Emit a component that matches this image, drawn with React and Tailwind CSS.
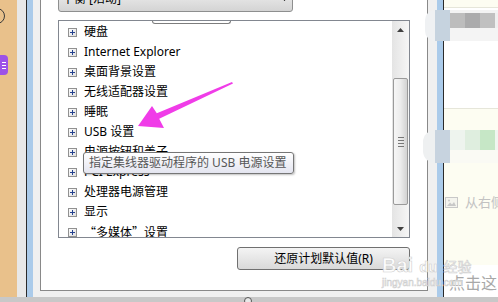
import React from "react"

const cjk = "font-['Noto_Sans','Noto_Sans_CJK_SC',sans-serif]"

const items = [
    "硬盘",
    "Internet Explorer",
    "桌面背景设置",
    "无线适配器设置",
    "睡眠",
    "USB 设置",
    "电源按钮和盖子",
    "PCI Express",
    "处理器电源管理",
    "显示",
    "“多媒体”设置",
]

function PlusBox() {
    return (
        <svg width="9" height="9" viewBox="0 0 9 9" className="flex-none">
            <defs>
                <linearGradient id="pb" x1="0" y1="0" x2="1" y2="1">
                    <stop offset="0" stopColor="#ffffff" />
                    <stop offset="1" stopColor="#dcdcdc" />
                </linearGradient>
            </defs>
            <rect x="0.5" y="0.5" width="8" height="8" fill="url(#pb)" stroke="#919191" />
            <path d="M2 4.5h5M4.5 2v5" stroke="#24418f" strokeWidth="1" />
        </svg>
    )
}

function ListRow({ label }) {
    return (
        <div className="h-[20px] flex items-center pl-[9px] gap-[7px] whitespace-nowrap">
            <PlusBox />
            {label.startsWith("“") ? (
                <span className="font-['Noto_Sans_CJK_SC',sans-serif] text-black">{label}</span>
            ) : (
                <span className="text-black">{label}</span>
            )}
        </div>
    )
}

function Scrollbar() {
    return (
        <div className="w-[17px] flex-none flex flex-col bg-gradient-to-r from-[#e4e4e4] to-[#f6f6f6]">
            <div className="h-[17px] flex items-center justify-center">
                <svg width="7" height="4" viewBox="0 0 7 4">
                    <path d="M0 4L3.5 0L7 4Z" fill="#404040" />
                </svg>
            </div>
            <div className="h-[40px]" />
            <div className="h-[127px] mx-[1px] rounded-[2px] border border-[#9a9a9a] bg-gradient-to-r from-[#f6f6f6] via-[#ececec] to-[#d2d2d2] flex flex-col items-center justify-center gap-[2px]">
                <div className="w-[6px] h-px bg-[#777]" />
                <div className="w-[6px] h-px bg-[#777]" />
                <div className="w-[6px] h-px bg-[#777]" />
                <div className="w-[6px] h-px bg-[#777]" />
            </div>
            <div className="flex-1" />
            <div className="h-[17px] flex items-center justify-center">
                <svg width="7" height="4" viewBox="0 0 7 4">
                    <path d="M0 0L3.5 4L7 0Z" fill="#404040" />
                </svg>
            </div>
        </div>
    )
}

export default function App() {
    return (
        <div className={`relative w-[498px] h-[302px] overflow-hidden flex flex-col text-[12px] bg-white ${cjk}`}>
            <div className="flex h-[297px]">
                {/* left edge of the window behind */}
                <div className="relative w-[17px] flex-none bg-[#e9c18b]">
                    <div className="absolute left-[-11px] top-[8px] w-[16px] h-[16px] rounded-full border-[1.5px] border-[#3a3a3a]" />
                    <div className="absolute left-0 top-[55px] w-[8px] h-[20px] rounded-r-[4px] bg-[#9d52e8] flex flex-col items-center justify-center gap-[2px]">
                        <div className="w-[4px] h-px bg-white" />
                        <div className="w-[4px] h-px bg-white" />
                        <div className="w-[4px] h-px bg-white" />
                    </div>
                </div>
                <div className="w-[9px] flex-none bg-[#e8e8e8]" />
                <div className="w-px flex-none bg-[#2b2b2b]" />
                <div className="w-[6px] flex-none bg-[#abcbea]" />

                {/* dialog face */}
                <div className="w-[404px] flex-none bg-[#f0f0f0] pl-[7px] pr-[9px] pb-[6px]">
                    <div className="h-full bg-white border-x border-b border-[#898989] px-[17px] flex flex-col">
                        <div className="mt-[-14px] h-[26px] w-[235px] flex-none rounded-[3px] border border-[#8e8f8f] bg-gradient-to-b from-[#f3f3f3] to-[#d4d4d4] flex items-center justify-between pl-[3px] pr-[4px]">
                            <span className="text-black">平衡 [活动]</span>
                            <svg width="7" height="4" viewBox="0 0 7 4">
                                <path d="M0 0L3.5 4L7 0Z" fill="#000" />
                            </svg>
                        </div>

                        <div className="relative mt-[8px] h-[218px] flex-none border border-[#828790] flex overflow-hidden">
                            <div className="flex-1 pt-[1px] overflow-hidden">
                                {items.map((label) => (
                                    <ListRow key={label} label={label} />
                                ))}
                            </div>
                            <Scrollbar />
                            <div className="absolute left-[93px] top-0 w-[79px] h-[3px] border-x border-b border-[#7d7d7d] rounded-b-[3px]" />
                        </div>

                        <button className="mt-[9px] self-end h-[23px] w-[173px] rounded-[3px] border border-[#707070] bg-gradient-to-b from-[#f4f4f4] to-[#d9d9d9] text-black text-[12px]">
                            还原计划默认值(R)
                        </button>
                    </div>
                </div>

                <div className="w-[6px] flex-none bg-[#abcbea]" />
                <div className="w-px flex-none bg-[#2b2b2b]" />

                {/* page beside the dialog */}
                <div className="flex-1 flex flex-col">
                    <div className="h-[8px] bg-[#fdfdf2] border-b border-[#e6e6da]" />
                    <div className="h-[100px] bg-white" />
                    <div className="h-[157px] bg-[#fdfdf2] border-t border-[#e6e6da] pt-[84px] pl-[1px]">
                        <div className="flex items-center gap-[7px] text-[13px] text-[#c2c2c2] whitespace-nowrap">
                            <svg width="13" height="11" viewBox="0 0 13 11">
                                <rect x="0.5" y="0.5" width="12" height="10" fill="#f4f4ee" stroke="#c8c8c8" />
                                <path d="M2 9L5 5.5L7 7.5L9 5L11 9Z" fill="#c8c8c8" />
                                <circle cx="4" cy="3.5" r="1" fill="#c8c8c8" />
                            </svg>
                            <span>从右侧</span>
                        </div>
                    </div>
                    <div className="flex-1 bg-white pl-[5px] pt-[10px]">
                        <span className="text-[16px] leading-[16px] text-[#a8a8a8] whitespace-nowrap">点击这</span>
                    </div>
                </div>
            </div>
            <div className="h-[5px] flex-none bg-[#c8c8c8]" />

            {/* blurred items on the page at right */}
            <div className="absolute left-[425px] top-[10px] w-[73px] h-[31px] flex">
                <div className="w-[10px] bg-[#eff1f3] rounded-l-[12px]" />
                <div className="w-[15px] bg-[#c6d3df]" />
                <div className="flex-1 flex flex-col">
                    <div className="h-[3px] bg-[#f3f3f3]" />
                    <div className="h-[15px] flex">
                        <div className="w-[15px] bg-[#bdbdbd]" />
                        <div className="w-[15px] bg-[#ababac]" />
                        <div className="w-[15px] bg-[#c0c0c0]" />
                        <div className="flex-1 bg-[#efefef]" />
                    </div>
                    <div className="flex-1 bg-[#f4f4f4]" />
                </div>
            </div>
            <div className="absolute left-[423px] top-[130px] w-[75px] h-[33px] flex">
                <div className="w-[12px] bg-[#eef0f1] rounded-l-[12px]" />
                <div className="w-[15px] bg-[#c7d3df]" />
                <div className="flex-1 flex flex-col">
                    <div className="h-[20px] flex">
                        <div className="w-[15px] bg-[#eef4ee]" />
                        <div className="w-[15px] bg-[#dfeedf]" />
                        <div className="w-[15px] bg-[#c6e7c6]" />
                        <div className="flex-1 bg-[#f0f6f0]" />
                    </div>
                    <div className="flex-1 bg-[#fafaf4]" />
                </div>
            </div>

            {/* tooltip */}
            <div className="absolute left-[83px] top-[152px] w-[211px] h-[22px] rounded-[3px] border border-[#767676] bg-gradient-to-b from-white to-[#e4e5f0] shadow-[1px_1px_2px_rgba(0,0,0,0.25)] flex items-center pl-[5px] text-[#575757] whitespace-nowrap">
                指定集线器驱动程序的 USB 电源设置
            </div>

            {/* magenta arrow */}
            <svg className="absolute left-[136px] top-[80px]" width="100" height="50" viewBox="0 0 100 50">
                <polygon points="96,2 20.8,33.3 16,26 2,46 28,48 23.2,38.7 97,3.6" fill="#f03ce8" />
            </svg>

            {/* watermark */}
            <div className="absolute left-[382px] top-[255px] flex flex-col text-white/90 [-webkit-text-stroke:0.6px_#cfcfcf]">
                <div className="flex items-end h-[20px] font-['Liberation_Sans',sans-serif] font-bold text-[20px] leading-[20px]">
                    <span>Bai</span>
                    <span className="ml-[6px] text-[15px] leading-[16px]">du</span>
                    <span className={`ml-[6px] text-[14px] leading-[16px] font-normal ${cjk}`}>经验</span>
                </div>
                <div className="font-['Liberation_Sans',sans-serif] text-[10px] leading-[12px] mt-[2px]">jingyan.baidu.com</div>
            </div>

            <div className="absolute left-[244px] top-[297px] w-[8px] h-[8px] rounded-full border border-[#555] bg-[#e8e8e8]" />
        </div>
    )
}
